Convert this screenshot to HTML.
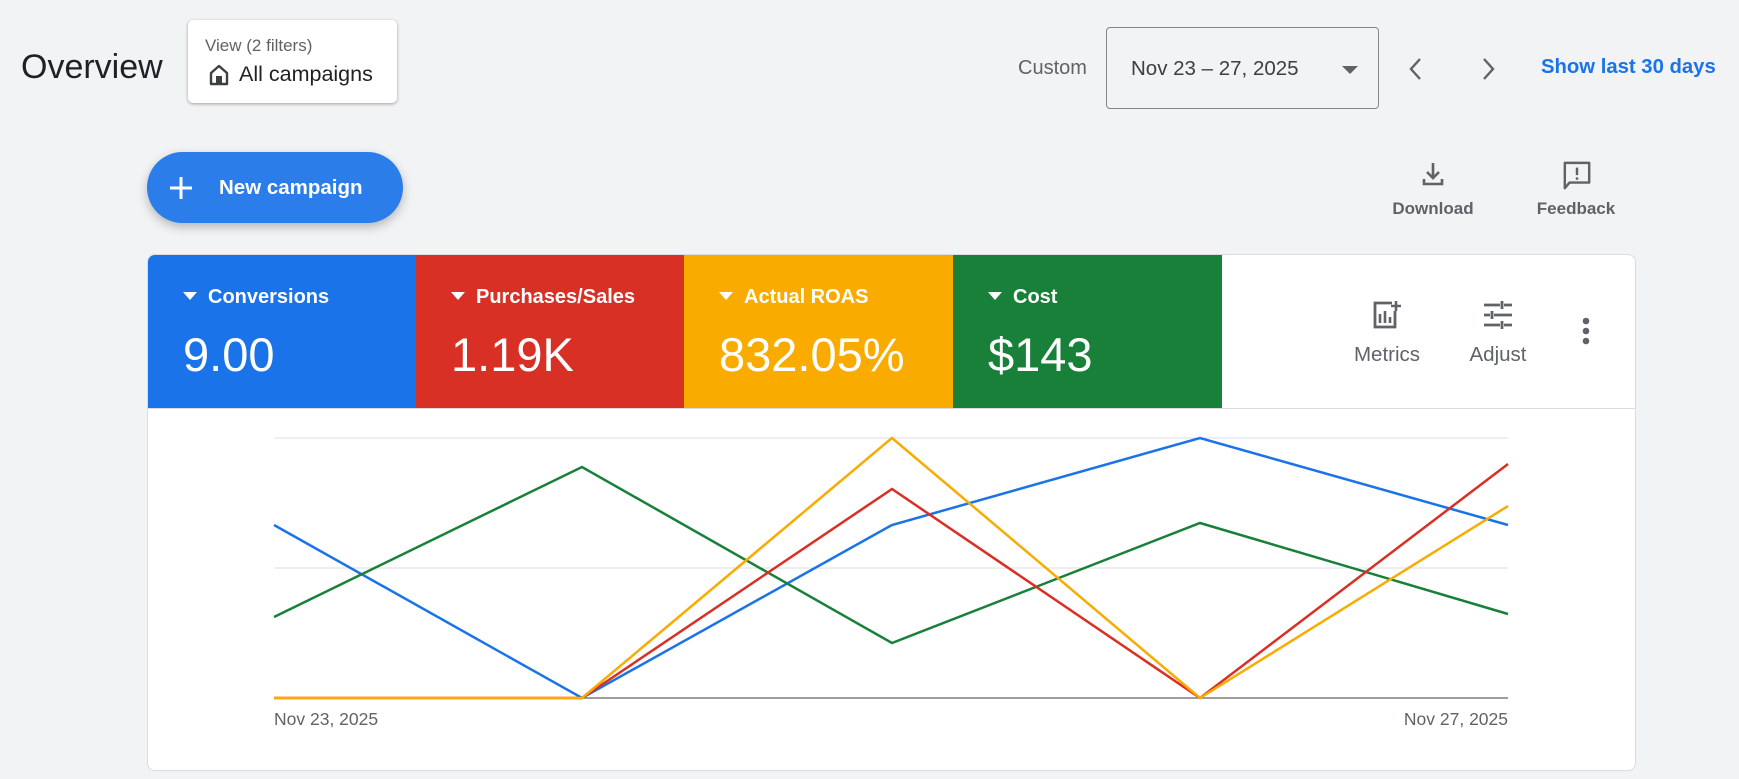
<!DOCTYPE html>
<html><head><meta charset="utf-8"><style>
*{box-sizing:border-box;margin:0;padding:0}
body{width:1739px;height:779px;background:#f1f3f4;font-family:"Liberation Sans",sans-serif;position:relative;overflow:hidden;color:#3c4043}
.a{position:absolute}
.tile{position:absolute;top:0;height:153px;color:#fff}
.tile .l{position:absolute;left:35px;top:31px;font-size:20px;font-weight:bold;white-space:nowrap}
.tile .l:before{content:"";display:inline-block;border-left:7px solid transparent;border-right:7px solid transparent;border-top:8px solid #fff;margin-right:11px;vertical-align:3px}
.tile .v{position:absolute;left:35px;top:72px;font-size:47px}
.lbl{font-size:17px;font-weight:bold;color:#5f6368;text-align:center}
</style></head><body>
<div class="a" style="left:21px;top:48px;font-size:34px;color:#202124">Overview</div>
<div class="a" style="left:188px;top:20px;width:209px;height:83px;background:#fff;border-radius:5px;box-shadow:0 1px 3px rgba(0,0,0,.35)">
 <div class="a" style="left:17px;top:16px;font-size:17px;color:#5f6368">View (2 filters)</div>
 <svg class="a" style="left:19px;top:43px" width="24" height="24" viewBox="0 0 24 24"><path d="M12 3L4 10v11h16V10z" fill="none" stroke="#3c4043" stroke-width="2.4" stroke-linejoin="round"/><rect x="9" y="13" width="6" height="8" fill="#3c4043"/></svg>
 <div class="a" style="left:51px;top:42px;font-size:21.5px;color:#202124">All campaigns</div>
</div>
<div class="a" style="left:1018px;top:57px;font-size:20px;color:#5f6368">Custom</div>
<div class="a" style="left:1106px;top:27px;width:273px;height:82px;border:1px solid #80868b;border-radius:4px">
 <div class="a" style="left:24px;top:29px;font-size:20.5px;color:#3c4043">Nov 23 – 27, 2025</div>
 <div class="a" style="left:235px;top:38px;border-left:8px solid transparent;border-right:8px solid transparent;border-top:8px solid #5f6368"></div>
</div>
<svg class="a" style="left:1404px;top:55px" width="24" height="28" viewBox="0 0 24 28"><path d="M16 4L7 14l9 10" fill="none" stroke="#5f6368" stroke-width="2.4"/></svg>
<svg class="a" style="left:1476px;top:55px" width="24" height="28" viewBox="0 0 24 28"><path d="M8 4l9 10-9 10" fill="none" stroke="#5f6368" stroke-width="2.4"/></svg>
<div class="a" style="left:1541px;top:56px;font-size:20.3px;font-weight:bold;color:#1a73e8">Show last 30 days</div>
<div class="a" style="left:147px;top:152px;width:256px;height:71px;border-radius:36px;background:#2b7de9;box-shadow:0 4px 10px rgba(0,0,0,.25);color:#fff">
 <svg class="a" style="left:21px;top:23px" width="26" height="26" viewBox="0 0 26 26"><path d="M13 2v22M2 13h22" stroke="#fff" stroke-width="3"/></svg>
 <div class="a" style="left:72px;top:24px;font-size:20.5px;font-weight:bold">New campaign</div>
</div>
<svg class="a" style="left:1419px;top:160px" width="28" height="28" viewBox="0 0 28 28"><path d="M14 3v15M8 12l6 6 6-6M5 19v5h18v-5" fill="none" stroke="#5f6368" stroke-width="2.6"/></svg>
<div class="a lbl" style="left:1383px;top:199px;width:100px">Download</div>
<svg class="a" style="left:1562px;top:160px" width="30" height="32" viewBox="0 0 32 34"><path d="M3 3h26v21H8l-5 6z" fill="none" stroke="#5f6368" stroke-width="2.6" stroke-linejoin="round"/><path d="M16 8v8M16 18.5v2.5" stroke="#5f6368" stroke-width="2.6"/></svg>
<div class="a lbl" style="left:1526px;top:199px;width:100px">Feedback</div>
<div class="a" style="left:147px;top:254px;width:1489px;height:517px;background:#fff;border:1px solid #dadce0;border-radius:8px;overflow:hidden">
 <div class="tile" style="left:0;width:268px;background:#1a73e8"><div class="l">Conversions</div><div class="v">9.00</div></div>
 <div class="tile" style="left:268px;width:268px;background:#d93025"><div class="l">Purchases/Sales</div><div class="v">1.19K</div></div>
 <div class="tile" style="left:536px;width:269px;background:#f9ab00"><div class="l">Actual ROAS</div><div class="v">832.05%</div></div>
 <div class="tile" style="left:805px;width:269px;background:#188038"><div class="l">Cost</div><div class="v">$143</div></div>
 <div class="a" style="left:0;top:153px;width:100%;height:1px;background:#dadce0"></div>
 <svg class="a" style="left:1224px;top:45px" width="30" height="30" viewBox="0 0 30 30"><path d="M20 3H3v24h20V11" fill="none" stroke="#5f6368" stroke-width="2.8"/><path d="M24 1v10M19 6h10M8 14v9M13 11v12M18 17v6" stroke="#5f6368" stroke-width="2.6"/></svg>
 <div class="a lbl" style="left:1189px;top:88px;width:100px;font-weight:normal;font-size:20.5px">Metrics</div>
 <svg class="a" style="left:1335px;top:45px" width="30" height="30" viewBox="0 0 30 30"><path d="M1 5h16M21 5h8M19 1v8M1 15h6M11 15h18M9 11v8M1 25h16M21 25h8M19 21v8" stroke="#5f6368" stroke-width="2.8"/></svg>
 <div class="a lbl" style="left:1300px;top:88px;width:100px;font-weight:normal;font-size:20.5px">Adjust</div>
 <svg class="a" style="left:1432px;top:62px" width="12" height="30" viewBox="0 0 12 30"><circle cx="6" cy="4" r="3.3" fill="#5f6368"/><circle cx="6" cy="14" r="3.3" fill="#5f6368"/><circle cx="6" cy="24" r="3.3" fill="#5f6368"/></svg>
</div>
<svg class="a" style="left:0;top:0" width="1739" height="779">
 <line x1="274" y1="438" x2="1508" y2="438" stroke="#dadce0"/>
 <line x1="274" y1="568" x2="1508" y2="568" stroke="#dadce0"/>
 <line x1="274" y1="698" x2="1508" y2="698" stroke="#5f6368" stroke-width="1.3"/>
 <g fill="none" stroke-width="2.5">
 <polyline stroke="#1a73e8" points="274,525 582,698 892,525 1200,438 1508,525"/>
 <polyline stroke="#188038" points="274,617 582,467 892,643 1200,523 1508,614"/>
 <polyline stroke="#d93025" points="274,698 582,698 892,489 1200,698 1508,464"/>
 <polyline stroke="#f9ab00" points="274,698 582,698 892,438 1200,698 1508,506"/>
 </g>
</svg>
<div class="a" style="left:274px;top:709px;font-size:17.5px;color:#5f6368">Nov 23, 2025</div>
<div class="a" style="left:1300px;top:709px;width:208px;text-align:right;font-size:17.5px;color:#5f6368">Nov 27, 2025</div>
</body></html>
